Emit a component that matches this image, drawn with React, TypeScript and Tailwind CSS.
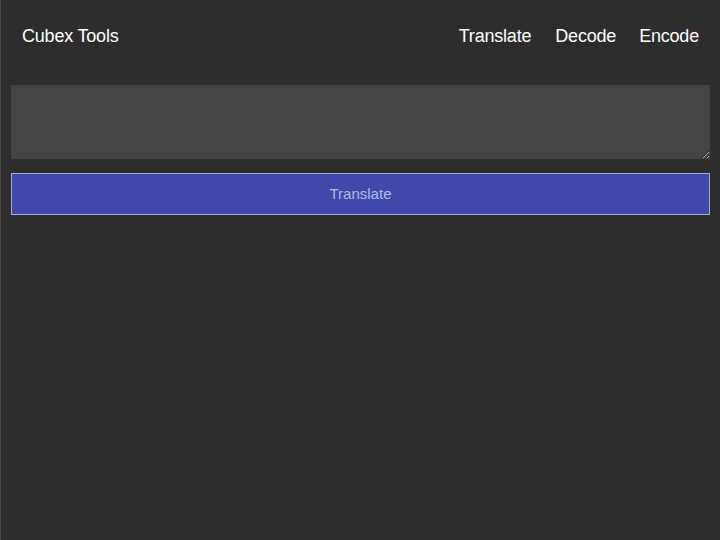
import React from "react";

export default function App() {
  return (
    <div
      className="w-[720px] h-[540px] bg-[#2d2d2d] border-l border-[#4a4a4a] overflow-hidden"
      style={{ fontFamily: '"Liberation Sans", Arial, sans-serif' }}
    >
      <header className="flex items-center justify-between h-[72px] pl-[21px] pr-[21px]">
        <div className="text-[18px] text-white tracking-[-0.2px]">Cubex Tools</div>
        <nav className="flex text-[18px] text-white tracking-[-0.2px]">
          <span className="mr-[24px]">Translate</span>
          <span className="mr-[23px]">Decode</span>
          <span>Encode</span>
        </nav>
      </header>
      <main className="px-[10px] pt-[13px] flex flex-col gap-[14px]">
        <textarea className="block w-full h-[74px] bg-[#444444] border-0 outline-none resize-y text-white p-2" />
        <button className="h-[42px] w-full bg-[#3e49ab] border border-[#a3aade] text-[#b3bae6] text-[15px]">
          Translate
        </button>
      </main>
    </div>
  );
}
